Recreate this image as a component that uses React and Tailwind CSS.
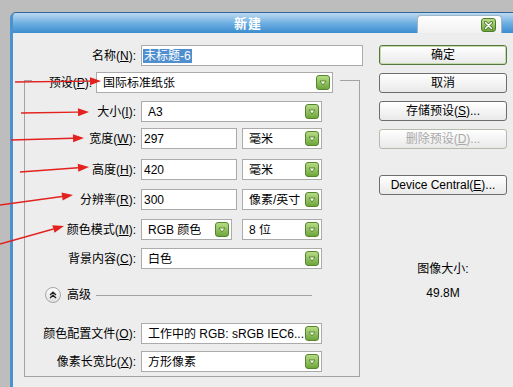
import React from "react";

const arrows = [
  [15, 82, 101, 81],
  [21, 113, 89, 112],
  [11, 140, 84, 138],
  [20, 172, 89, 167],
  [0, 205, 73, 195],
  [0, 244, 64, 226],
];

function Arrows() {
  return (
    <svg className="absolute inset-0 pointer-events-none" width="513" height="387">
      {arrows.map(([x1, y1, x2, y2], i) => {
        const dx = x2 - x1, dy = y2 - y1;
        const len = Math.hypot(dx, dy);
        const ux = dx / len, uy = dy / len;
        const bx = x2 - ux * 11, by = y2 - uy * 11;
        const px = -uy * 4, py = ux * 4;
        return (
          <g key={i}>
            <line x1={x1} y1={y1} x2={bx} y2={by} stroke="#e3221f" strokeWidth="1.4" />
            <polygon points={`${x2},${y2} ${bx + px},${by + py} ${bx - px},${by - py}`} fill="#e3221f" />
          </g>
        );
      })}
    </svg>
  );
}

function GreenBtn() {
  return (
    <div className="ml-auto mr-[2px] w-[14px] h-[15px] shrink-0 rounded-[3px] border border-[#55842e] bg-linear-to-b from-[#b6dc84] to-[#6ea63b] flex items-center justify-center">
      <svg width="8" height="6" viewBox="0 0 8 6">
        <path d="M1 1 L7 1 L4 5 Z" fill="#f4fbe9" stroke="#4a7a25" strokeWidth="0.8" strokeLinejoin="round" />
      </svg>
    </div>
  );
}

function Drop({ className, children }) {
  return (
    <div className={`flex items-center h-[21px] bg-white border border-[#ababab] pl-[6px] ${className}`}>
      <span className="whitespace-nowrap overflow-hidden leading-none">{children}</span>
      <GreenBtn />
    </div>
  );
}

function Input({ className, children }) {
  return (
    <div className={`flex items-center h-[21px] bg-white border border-[#ababab] pl-[2px] ${className}`}>
      <span className="leading-none">{children}</span>
    </div>
  );
}

function Label({ children }) {
  return (
    <div className="w-[116px] pr-[5px] text-right whitespace-nowrap leading-none shrink-0">{children}</div>
  );
}

function U({ children }) {
  return <span className="underline underline-offset-1">{children}</span>;
}

function Btn({ children, className = "" }) {
  return (
    <div className={`h-[20px] w-[128px] rounded-[3px] border bg-linear-to-b from-[#ffffff] to-[#e9e9e9] flex items-center justify-center leading-none whitespace-nowrap ${className}`}>
      {children}
    </div>
  );
}

export default function App() {
  return (
    <div className="relative w-[513px] h-[387px] overflow-hidden bg-[#bdbdbd] pt-[12px] pl-[10px] text-[12px] text-black font-['Liberation_Sans','Noto_Sans_CJK_SC',sans-serif]">
      <div className="flex flex-col h-full rounded-tl-[6px] border-l-[3px] border-t border-l-[#4b93cf] border-t-[#2f6496] overflow-hidden">
        {/* title bar */}
        <div className="h-[20px] flex items-end bg-linear-to-b from-[#bcd9f1] via-[#6fb0e2] to-[#3a8ccf] shrink-0">
          <div className="w-[221px] shrink-0" />
          <div className="self-center text-white font-bold text-[13px] leading-none tracking-[1px]">新建</div>
          <div className="flex-1" />
          <div className="w-[85px] h-[18px] shrink-0 rounded-t-[4px] border border-b-0 border-[#9fb6c8] bg-linear-to-b from-[#ffffff] to-[#f1f1f1] flex items-start">
            <div className="ml-[63px] mt-[2px] w-[15px] h-[14px] rounded-[3px] border border-[#4d7c2a] bg-linear-to-b from-[#b9de88] to-[#6da63a] flex items-center justify-center">
              <svg width="9" height="9" viewBox="0 0 9 9">
                <path d="M1.5 1.5 L7.5 7.5 M7.5 1.5 L1.5 7.5" stroke="#3f6a20" strokeWidth="3" strokeLinecap="round" />
                <path d="M1.5 1.5 L7.5 7.5 M7.5 1.5 L1.5 7.5" stroke="#ffffff" strokeWidth="1.6" strokeLinecap="round" />
              </svg>
            </div>
          </div>
          <div className="w-[11px] shrink-0" />
        </div>

        {/* content */}
        <div className="flex-1 flex bg-[#ededed]">
          {/* left column */}
          <div className="w-[352px] shrink-0 pt-[12px] flex flex-col">
            <div className="flex items-center h-[21px]">
              <div className="w-[128px] pr-[5px] text-right leading-none shrink-0">名称(<U>N</U>):</div>
              <div className="w-[222px] h-[21px] bg-white border border-[#ababab] flex items-center pl-[1px]">
                <span className="bg-[#4f8fcf] text-white leading-none px-[1px] py-[1px]">未标题-6</span>
              </div>
            </div>

            <div className="ml-[11px] mt-[14px] w-[336px] border-l border-r border-b border-[#a3a3a3] flex flex-col pb-[4px]">
              {/* preset row over top border */}
              <div className="-mt-[8px] h-[21px] flex items-start">
                <div className="w-[7px] h-px bg-[#a3a3a3] mt-[8px] shrink-0" />
                <div className="w-[64px] pr-[4px] self-center text-right leading-none whitespace-nowrap shrink-0">预设(<U>P</U>):</div>
                <Drop className="w-[237px] shrink-0">国际标准纸张</Drop>
                <div className="flex-1 ml-[7px] h-px bg-[#a3a3a3] mt-[8px]" />
              </div>

              <div className="mt-[8px] flex items-center">
                <Label>大小(<U>I</U>):</Label>
                <Drop className="w-[181px]">A3</Drop>
              </div>

              <div className="mt-[6px] flex items-center">
                <Label>宽度(<U>W</U>):</Label>
                <Input className="w-[96px]">297</Input>
                <Drop className="w-[80px] ml-[5px]">毫米</Drop>
              </div>

              <div className="mt-[10px] flex items-center">
                <Label>高度(<U>H</U>):</Label>
                <Input className="w-[96px]">420</Input>
                <Drop className="w-[80px] ml-[5px]">毫米</Drop>
              </div>

              <div className="mt-[9px] flex items-center">
                <Label>分辨率(<U>R</U>):</Label>
                <Input className="w-[96px]">300</Input>
                <Drop className="w-[80px] ml-[5px] pl-[4px]">像素/英寸</Drop>
              </div>

              <div className="mt-[9px] flex items-center">
                <Label>颜色模式(<U>M</U>):</Label>
                <Drop className="w-[91px]">RGB 颜色</Drop>
                <Drop className="w-[80px] ml-[10px]">8 位</Drop>
              </div>

              <div className="mt-[8px] flex items-center">
                <Label>背景内容(<U>C</U>):</Label>
                <Drop className="w-[181px]">白色</Drop>
              </div>

              <div className="mt-[18px] h-[16px] flex items-center">
                <div className="ml-[20px] w-[16px] h-[16px] rounded-full border border-[#a5a5a5] bg-linear-to-b from-[#ffffff] to-[#e0e0e0] flex items-center justify-center shrink-0">
                  <svg width="8" height="8" viewBox="0 0 8 8">
                    <path d="M1 4 L4 1.2 L7 4 M1 7 L4 4.2 L7 7" fill="none" stroke="#222" strokeWidth="1.3" />
                  </svg>
                </div>
                <div className="ml-[6px] leading-none">高级</div>
                <div className="ml-[5px] mr-[47px] flex-1 h-px bg-[#a3a3a3]" />
              </div>

              <div className="mt-[20px] flex items-center">
                <Label>颜色配置文件(<U>O</U>):</Label>
                <Drop className="w-[181px]">工作中的 RGB: sRGB IEC6...</Drop>
              </div>

              <div className="mt-[7px] flex items-center">
                <Label>像素长宽比(<U>X</U>):</Label>
                <Drop className="w-[181px]">方形像素</Drop>
              </div>
            </div>
          </div>

          {/* right column */}
          <div className="ml-[14px] w-[128px] pt-[12px] flex flex-col items-center">
            <Btn className="border-[#56763f] shadow-[inset_0_0_0_1px_#c5dcaa]">确定</Btn>
            <Btn className="mt-[8px] border-[#6e6e6e]">取消</Btn>
            <Btn className="mt-[8px] border-[#6e6e6e]">存储预设(<U>S</U>)...</Btn>
            <Btn className="mt-[8px] border-[#b3bcaa] text-[#a9a9a9]">删除预设(<U>D</U>)...</Btn>
            <Btn className="mt-[26px] border-[#6e6e6e]">Device Central(<U>E</U>)...</Btn>
            <div className="mt-[66px] leading-[16px]">图像大小:</div>
            <div className="mt-[8px] leading-[16px]">49.8M</div>
          </div>
        </div>
      </div>
      <Arrows />
    </div>
  );
}
